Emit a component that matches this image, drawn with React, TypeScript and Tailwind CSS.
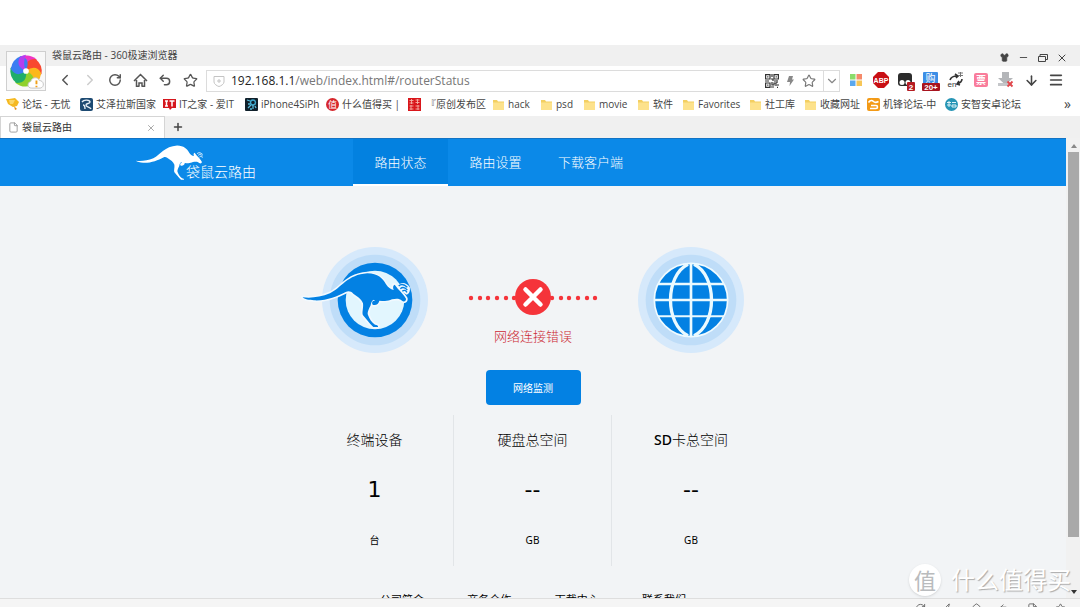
import React from 'react';
import {
  ArrowDown,
  ChevronDown,
  ChevronLeft,
  ChevronRight,
  File,
  House,
  Menu,
  Minus,
  Plus,
  RotateCw,
  Shirt,
  Star,
  Undo2,
  X,
  Zap,
} from 'lucide-react';

const UI_FONT = 'font-["Open_Sans","Noto_Sans_CJK_SC",sans-serif]';
const PAGE_FONT = 'font-["Noto_Sans","Noto_Sans_CJK_SC",sans-serif]';

const BOOKMARKS = [
  { label: '论坛 - 无忧', icon: 'cup', width: 'w-[74px]' },
  { label: '艾泽拉斯国家', icon: 'wow', width: 'w-[83px]' },
  { label: 'IT之家 - 爱IT', icon: 'it', width: 'w-[82px]' },
  { label: 'iPhone4SiPh', icon: 'phone', width: 'w-[81px]' },
  { label: '什么值得买 |', icon: 'zhi', width: 'w-[82px]' },
  { label: '『原创发布区', icon: 'seal', width: 'w-[84px]' },
  { label: 'hack', icon: 'folder', width: 'w-[48px]' },
  { label: 'psd', icon: 'folder', width: 'w-[43px]' },
  { label: 'movie', icon: 'folder', width: 'w-[54px]' },
  { label: '软件', icon: 'folder', width: 'w-[45px]' },
  { label: 'Favorites', icon: 'folder', width: 'w-[67px]' },
  { label: '社工库', icon: 'folder', width: 'w-[55px]' },
  { label: '收藏网址', icon: 'folder', width: 'w-[63px]' },
  { label: '机锋论坛-中', icon: 'gfan', width: 'w-[78px]' },
  { label: '安智安卓论坛', icon: 'anzhi', width: 'w-[80px]' },
];

const NAV_ITEMS = ['路由状态', '路由设置', '下载客户端'];

const STATS = [
  { prefix: '', title: '终端设备', value: '1', unit: '台' },
  { prefix: '', title: '硬盘总空间', value: '--', unit: 'GB' },
  { prefix: 'SD', title: '卡总空间', value: '--', unit: 'GB' },
];

const FOOTER_LINKS = ['公司简介', '商务合作', '下载中心', '联系我们'];

const BookmarkIcon = ({ kind }: { kind: string }) => {
  switch (kind) {
    case 'cup':
      return (
        <svg viewBox="0 0 13 13" className="size-[13px] shrink-0">
          <path d="M0 1l3 0 6-1 4 4-2 4-4 1-5-3z" fill="#f5b921" />
          <path d="M3 2l6 0-2 4-3 0z" fill="#fbd768" />
          <path d="M8 8l3 3-2 1z" fill="#e58f12" />
        </svg>
      );
    case 'wow':
      return (
        <svg viewBox="0 0 13 13" className="size-[13px] shrink-0">
          <rect width="13" height="13" rx="2" fill="#1d4a72" />
          <path d="M2 4c2-3 8-2 8 0s-4 1-4 3 4 2 5 4M3 7c1 0 2 1 2 4" fill="none" stroke="#e5eef5" strokeWidth="1.4" />
        </svg>
      );
    case 'it':
      return (
        <svg viewBox="0 0 13 13" className="size-[13px] shrink-0">
          <path d="M0 1h13v9H9l-2 2-1-2H0z" fill="#d5171d" />
          <path d="M2 3h3M3.5 3v5M2 8h3M6.500 3h5M9 3v5.500" fill="none" stroke="#fff" strokeWidth="1.500" />
        </svg>
      );
    case 'phone':
      return (
        <svg viewBox="0 0 13 13" className="size-[13px] shrink-0">
          <rect width="13" height="13" rx="1" fill="#10202b" />
          <circle cx="8" cy="4.500" r="2.500" fill="none" stroke="#3fa9cf" strokeWidth="1.400" />
          <path d="M2 2l3 1M6 7l-3 3M8 7v4M3 6h2M10 8l1 2M5 11h2" stroke="#57b9d9" strokeWidth="1.300" />
        </svg>
      );
    case 'zhi':
      return (
        <svg viewBox="0 0 13 13" className="size-[13px] shrink-0">
          <circle cx="6.500" cy="6.500" r="6.500" fill="#d6272c" />
          <text x="6.500" y="10" textAnchor="middle" fontSize="9" fill="#fff" fontFamily="Noto Sans CJK SC, sans-serif">值</text>
        </svg>
      );
    case 'seal':
      return (
        <svg viewBox="0 0 13 13" className="mr-0.5 size-[13px] shrink-0">
          <rect width="13" height="13" fill="#d9161b" />
          <path d="M1.500 2.500h4M1.500 5h4M3.500 1v5M7.500 2h4M7.500 4.500h4M9.500 1v5M1.500 8h4M1.500 11h4M3 7v5M7.500 8h4M7.500 11h4M10 7v5" stroke="#f6b0a6" strokeWidth="0.900" />
        </svg>
      );
    case 'gfan':
      return (
        <svg viewBox="0 0 13 13" className="size-[13px] shrink-0">
          <rect width="13" height="13" rx="2" fill="#f39a16" />
          <path d="M1.500 4.500c2-3 4-2 5-1s3 1 5 0M4 7.500h5c2 0 2 3 0 3H3" fill="none" stroke="#fff" strokeWidth="1.600" />
        </svg>
      );
    case 'anzhi':
      return (
        <svg viewBox="0 0 13 13" className="size-[13px] shrink-0">
          <circle cx="6.500" cy="6.500" r="6.500" fill="#2795b5" />
          <path d="M2 4.500h4M2 7h4M4 3v6M7 4.500h4M7 7h4v2H7z" fill="none" stroke="#dff3f8" strokeWidth="1" />
        </svg>
      );
    default:
      return (
        <svg viewBox="0 0 13 13" className="size-[13px] shrink-0">
          <path d="M1 2h4l1 1.500h6V12H1z" fill="#f3cf62" />
          <path d="M1 4.500h11V12H1z" fill="#fde28c" />
        </svg>
      );
  }
};

const PETALS = ['#ee35c4', '#f9482f', '#fcb81c', '#8fd12c', '#1fae6a', '#3b7df2'];

const BrowserLogo = () => (
  <svg viewBox="0 0 40 40" className="size-[38px]">
    {PETALS.map((color, i) => (
      <path
        key={color}
        d="M20 20Q8 15 14 5A17 17 0 0 1 31 7.500Q34 18 20 20Z"
        fill={color}
        transform={`rotate(${i * 60} 20 20)`}
      />
    ))}
    <path d="M20 20Q8 15 14 5A17 17 0 0 1 20 3Q16 12 20 20Z" fill="#b63df0" />
    <circle cx="20" cy="20" r="3" fill="#fff" />
    <path d="M26 38c-5 0-5-6-1-7 1-5 8-5 9-1 5 0 6 7 1 8z" fill="#fff" stroke="#c3c3c3" strokeWidth="1" />
    <path d="M31 30v4M31 35.500v1.500" stroke="#f0a018" strokeWidth="2" />
  </svg>
);

const QrIcon = () => (
  <svg viewBox="0 0 14 14" className="size-[14px]" fill="none" stroke="#333" strokeWidth="1.200">
    <path d="M.6.6h4.400v4.400H.6zM9 .6h4.400v4.400H9zM.6 9h4.400v4.400H.6z" />
    <path d="M2.200 2.800h1.200M10.600 2.800h1.200M2.200 11.200h1.200M7 0v3M6 5h2v2M0 7h4M9 7h2M12 6v3M7 8v3h2V9h2v3M6 13h3M12 11h2M12 13.400h1" />
  </svg>
);

const Extensions = () => (
  <>
    <button aria-label="应用" className="flex w-[18px] justify-center">
      <svg viewBox="0 0 12 12" className="size-3">
        <path d="M0 0h5.500v5.500H0z" fill="#8bdc6b" />
        <path d="M6.500 0H12v5.500H6.500z" fill="#f58a6a" />
        <path d="M0 6.500h5.500V12H0z" fill="#5ba8ee" />
        <path d="M6.500 6.500H12V12H6.500z" fill="#f7c657" />
      </svg>
    </button>
    <button aria-label="ABP" className="flex w-[18px] justify-center">
      <svg viewBox="0 0 16 16" className="size-4">
        <path d="M5 0h6l5 5v6l-5 5H5l-5-5V5z" fill="#c90f14" />
        <text x="8" y="10.500" textAnchor="middle" fontSize="7" fontWeight="700" fill="#fff" fontFamily="Liberation Sans, sans-serif">ABP</text>
      </svg>
    </button>
    <button aria-label="脚本" className="flex w-[18px] justify-center">
      <svg viewBox="0 0 18 20" className="mt-1 h-5 w-[18px]">
        <rect x="1" y="1" width="14" height="13" rx="3" fill="#2c2c2c" />
        <circle cx="5" cy="10.500" r="2.500" fill="#fff" />
        <circle cx="11" cy="10.500" r="2.500" fill="#fff" />
        <rect x="10" y="10" width="8" height="9" rx="1" fill="#b51c22" />
        <text x="14" y="17.500" textAnchor="middle" fontSize="8" fontWeight="700" fill="#fff" fontFamily="Liberation Sans, sans-serif">2</text>
      </svg>
    </button>
    <button aria-label="购物" className="flex w-[18px] justify-center">
      <svg viewBox="0 0 18 20" className="mt-1 h-5 w-[18px]">
        <rect x="1" y="0" width="15" height="13" rx="1" fill="#3c8ee6" />
        <text x="8.500" y="10" textAnchor="middle" fontSize="10" fill="#fff" fontFamily="Noto Sans CJK SC, sans-serif">购</text>
        <rect x="0" y="11" width="18" height="8" rx="1" fill="#a8141f" />
        <text x="9" y="18" textAnchor="middle" fontSize="8" fontWeight="700" fill="#fff" fontFamily="Liberation Sans, sans-serif">20+</text>
      </svg>
    </button>
    <button aria-label="翻译" className="flex w-[18px] justify-center">
      <svg viewBox="0 0 18 18" className="size-[18px]">
        <path d="M3 9c1-3 4-4 7-4M8 3l3 2-2 2M15 8c0 3-2 4-5 5M12 10l-2 3 3 1" fill="none" stroke="#333" strokeWidth="1.600" />
        <path d="M11 2h5M11 4.500h5M13.500 1v5" stroke="#777" strokeWidth="1" />
        <text x="5" y="16" textAnchor="middle" fontSize="8" fill="#333" fontFamily="Liberation Sans, sans-serif">en</text>
      </svg>
    </button>
    <button aria-label="抢票" className="flex w-[18px] justify-center">
      <span className="flex size-[14px] items-center justify-center rounded-xs bg-[#f97c9b] text-[10px] leading-none font-bold text-white">票</span>
    </button>
    <button aria-label="下载助手" className="flex w-[18px] justify-center">
      <svg viewBox="0 0 16 16" className="size-4">
        <path d="M4 0h7v6h4l-7.500 7L0 6h4z" fill="#b4b6b9" />
        <path d="M0 11h14v3H0z" fill="#c4c6c9" />
        <path d="M9.500 9.500l5 5M14.500 9.500l-5 5" stroke="#e2464b" strokeWidth="1.800" />
      </svg>
    </button>
    <button aria-label="下载" className="flex w-[18px] justify-center text-[#444]">
      <ArrowDown className="size-[15px]" strokeWidth={2.5} />
    </button>
    <button aria-label="菜单" className="flex w-[18px] justify-center text-[#444]">
      <Menu className="size-4" strokeWidth={2.5} />
    </button>
  </>
);

const KANGAROO =
  'M38 187C62 190 92 187 120 175C155 158 172 119 232 115C264 116 278 130 288 148C295 158 301 163 311 165C308 157 309 151 314 149L324 162C331 170 342 180 348 191C349 198 341 202 336 197C328 190 319 190 306 193C294 200 281 198 268 197C266 207 257 213 248 209C244 202 247 196 255 197L252 194C245 196 243 204 242 211C236 223 231 233 234 240C238 251 245 263 255 269C261 270 266 272 264 276H250C242 269 236 261 219 241C215 234 221 218 219 205C214 190 201 185 190 176C183 169 176 167 167 171C142 184 108 198 72 196C58 195 43 193 38 187Z';

const KANGAROO_EAR = 'M326 153C334 146 344 149 352 157M331 161C338 155 345 157 352 165M337 169C342 164 347 166 351 172';

const Kangaroo = () => (
  <svg viewBox="34 108 324 174" className="h-[37px] w-[69px]">
    <path d={KANGAROO} fill="#fff" />
    <path d={KANGAROO_EAR} fill="none" stroke="#fff" strokeWidth="4" />
  </svg>
);

const RouterBadge = () => (
  <svg viewBox="18 24 474 342" className="h-[114px] w-full">
    <circle cx="255" cy="195" r="159" fill="#d6e9fb" />
    <circle cx="255" cy="195" r="136" fill="#bfddf8" />
    <circle cx="255" cy="195" r="112" fill="#0381e3" />
    <circle cx="255" cy="195" r="88" fill="#e2f6fe" />
    <path d={KANGAROO} fill="#0381e3" stroke="#f2f9fe" strokeWidth="10" strokeLinejoin="round" paintOrder="stroke" />
    <path d="M322 156C330 138 350 142 359 157C362 166 357 178 350 179C340 174 332 166 322 156Z" fill="#f2f9fe" />
    <path d={KANGAROO_EAR} fill="none" stroke="#0381e3" strokeWidth="4" />
  </svg>
);

const GlobeBadge = () => (
  <svg viewBox="18 24 474 342" className="h-[114px] w-full">
    <circle cx="255" cy="195" r="159" fill="#d6e9fb" />
    <circle cx="255" cy="195" r="136" fill="#bfddf8" />
    <circle cx="255" cy="195" r="110" fill="#0381e3" stroke="#f0fbff" strokeWidth="5" />
    <g fill="none" stroke="#eafaff" strokeWidth="8">
      <path d="M255 85V305M145 195H365M156 147H354" />
      <path d="M156 244H354" strokeWidth="6" />
      <path d="M246 88C176 122 176 268 246 302M264 88C334 122 334 268 264 302" strokeWidth="10" />
    </g>
  </svg>
);

const LinkError = () => (
  <svg viewBox="0 0 158 38" className="h-[38px] w-full">
    {[17, 26, 34, 43, 52, 60, 98, 107, 115, 124, 133, 141].map((x) => (
      <circle key={x} cx={x} cy="20" r="2.200" fill="#f5343a" />
    ))}
    <circle cx="79" cy="19" r="18" fill="#f5343a" />
    <path d="M71.500 11.500l15 15M86.500 11.500l-15 15" stroke="#fff" strokeWidth="4.500" strokeLinecap="round" />
  </svg>
);

const TitleBar = () => (
  <div className="flex h-[21px] items-center justify-between bg-[#f0f0f0] pr-[9px] pl-[52px] text-[#444]">
    <span className="pb-0.5 text-[10px] leading-4">袋鼠云路由 - 360极速浏览器</span>
    <div className="flex items-center pt-1">
      <button aria-label="皮肤" className="flex w-[19px] justify-center"><Shirt className="size-[9px]" fill="currentColor" /></button>
      <button aria-label="最小化" className="flex w-[19px] justify-center"><Minus className="size-[11px]" strokeWidth={2} /></button>
      <button aria-label="还原" className="flex w-[19px] justify-center">
        <svg viewBox="0 0 10 10" className="size-[10px]" fill="none" stroke="currentColor">
          <path d="M.5 3.500h7v5h-7zM2 3.500v-2h7.500v5h-2" />
        </svg>
      </button>
      <button aria-label="关闭" className="flex w-[19px] justify-center"><X className="size-[12px]" strokeWidth={2} /></button>
    </div>
  </div>
);

const Toolbar = () => (
  <div className="flex h-7 items-center gap-[7px] bg-white pr-[15px] pl-14 text-[#555]">
    <button aria-label="后退" className="flex w-[18px] justify-center"><ChevronLeft className="size-5" /></button>
    <button aria-label="前进" className="flex w-[18px] justify-center text-[#ccc]"><ChevronRight className="size-5" /></button>
    <button aria-label="刷新" className="flex w-[18px] justify-center"><RotateCw className="size-[14px]" strokeWidth={2.5} /></button>
    <button aria-label="主页" className="flex w-[18px] justify-center">
      <svg viewBox="0 0 15 15" className="size-[15px]" fill="none" stroke="currentColor" strokeWidth="1.500">
        <path d="M1 8l6.500-6.500L14 8M3.500 7v6.200H6M11.500 7v6.200H9M6 13.800V10h3v3.800" />
      </svg>
    </button>
    <button aria-label="撤销" className="flex w-[18px] justify-center"><Undo2 className="size-[14px]" strokeWidth={2.5} /></button>
    <button aria-label="收藏" className="flex w-[18px] justify-center"><Star className="size-[15px]" /></button>
    <div className="mt-0.5 flex h-[22px] flex-1 items-center border border-[#dcdcdc] text-xs">
      <svg viewBox="0 0 12 12" className="mx-1.5 size-3 shrink-0" fill="none" stroke="#c4c4c4">
        <path d="M1 1.500h10V7c0 2-3 4-5 4.500C4 11 1 9 1 7zM6 4v4M4 6h4" />
      </svg>
      <label htmlFor="address" className="text-[#222]">192.168.1.1</label>
      <input id="address" defaultValue="/web/index.html#/routerStatus" className="min-w-0 flex-1 text-[#777] outline-none" />
      <QrIcon />
      <svg viewBox="0 0 7 10" className="mx-2 h-2.5 w-[7px]">
        <path d="M2 0h4L5 3.500h2L2.500 10 3 6H0z" fill="#888" />
      </svg>
      <Star className="mr-[7px] size-[14px] text-[#777]" />
      <button aria-label="展开" className="flex h-full w-4 items-center justify-center border-l border-[#dcdcdc] text-[#888]">
        <ChevronDown className="size-3.5" />
      </button>
    </div>
    <Extensions />
  </div>
);

const Browser = () => (
  <header className={`relative shrink-0 ${UI_FONT}`}>
    <TitleBar />
    <Toolbar />
    <a href="#" aria-label="360极速浏览器" className="absolute top-[6px] left-[6px] border border-[#cfcfcf] bg-[#f8f8f8]">
      <BrowserLogo />
    </a>
    <nav className="flex h-[22px] items-center overflow-hidden bg-white pb-0.5 pl-1.5 text-[10px] leading-4 text-[#444]">
      {BOOKMARKS.map((item) => (
        <a key={item.label} href="#" className={`flex shrink-0 items-center gap-[3px] whitespace-nowrap ${item.width}`}>
          <BookmarkIcon kind={item.icon} />
          {item.label}
        </a>
      ))}
      <button className="mr-[9px] ml-auto text-sm leading-4">»</button>
    </nav>
    <div className="flex h-[22px] bg-[#f0f0f0] text-[10px] text-[#333]">
      <div className="flex w-[165px] items-center border border-b-0 border-[#d5d5d5] bg-white px-[7px]">
        <File className="mr-[3px] size-[11px] text-[#999]" />
        <span>袋鼠云路由</span>
        <button aria-label="关闭标签" className="mr-px ml-auto text-[#999]"><X className="size-[10px]" /></button>
      </div>
      <button aria-label="新标签" className="ml-[7px] text-[#444]"><Plus className="size-3" strokeWidth={3} /></button>
    </div>
  </header>
);

const RouterHeader = () => (
  <div className="h-[48px] border-t border-[#1273c4] bg-[#0b89e8] text-white">
    <div className="mx-auto flex h-full max-w-[796px]">
      <a href="#" className="flex w-[218px] items-center">
        <Kangaroo />
        <span className="-ml-[18px] self-end pb-1 text-sm font-light">袋鼠云路由</span>
      </a>
      {NAV_ITEMS.map((item, i) => (
        <a
          key={item}
          href="#"
          className={`flex w-[95px] items-center justify-center text-[13px] font-light ${
            i === 0 ? 'border-b-2 border-white bg-[#0381e0] pt-0.5' : ''
          }`}
        >
          {item}
        </a>
      ))}
    </div>
  </div>
);

const Status = () => (
  <section className="mx-auto w-[474px] pt-[57px]">
    <div className="grid grid-cols-3">
      <RouterBadge />
      <div className="flex flex-col items-center pt-[35px]">
        <LinkError />
        <p className="mt-[10px] text-[13px] leading-5 font-light text-[#cc2a33]">网络连接错误</p>
      </div>
      <GlobeBadge />
    </div>
    <div className="mt-[13px] flex justify-center">
      <button className="h-[35px] w-[95px] rounded bg-[#0381e3] pt-0.5 text-[10px] text-white">网络监测</button>
    </div>
    <div className="mt-[10px] grid grid-cols-3 divide-x divide-[#e2e5e8] text-center text-black">
      {STATS.map((stat) => (
        <div key={stat.prefix + stat.title} className="flex h-[151px] flex-col items-center pt-[15px]">
          <h3 className="text-sm leading-5 font-light">
            <span className="font-medium">{stat.prefix}</span>
            {stat.title}
          </h3>
          <strong className='mt-[25px] font-["DejaVu_Sans",sans-serif] text-[22px] leading-[30px] font-normal'>{stat.value}</strong>
          <span className="mt-[27px] text-[10px] leading-4">{stat.unit}</span>
        </div>
      ))}
    </div>
    <footer className="mt-[26px] flex justify-between px-[84px] text-[11px] leading-4 text-black">
      {FOOTER_LINKS.map((link) => (
        <a key={link} href="#">{link}</a>
      ))}
    </footer>
  </section>
);

const ScrollBar = () => (
  <div className="flex w-[14px] shrink-0 flex-col items-center bg-[#f1f1f1] pt-1.5 pb-1 pl-px">
    <svg viewBox="0 0 6 4" className="mb-1 h-1 w-1.5"><path d="M0 4l3-4 3 4z" fill="#888" /></svg>
    <div className="flex w-full flex-1 justify-center">
      <div className="h-[88%] w-[11px] bg-[#a9a9a9]" />
    </div>
    <svg viewBox="0 0 6 4" className="h-1 w-1.5"><path d="M0 0l3 4 3-4z" fill="#333" /></svg>
  </div>
);

const App: React.FC = () => {
  return (
    <div className="relative flex h-screen flex-col overflow-hidden bg-white pt-[45px]">
      <Browser />
      <div className={`flex min-h-0 flex-1 ${PAGE_FONT}`}>
        <main className="min-w-0 flex-1 overflow-hidden bg-[#f2f4f6]">
          <RouterHeader />
          <Status />
        </main>
        <ScrollBar />
      </div>
      <div className="flex h-[9px] shrink-0 items-start justify-end gap-[17px] overflow-hidden border-t border-[#dedede] bg-[#f5f5f5] pt-1 pr-[14px] text-[#666]">
        <RotateCw className="size-[11px] shrink-0" />
        <Zap className="size-[11px] shrink-0" />
        <House className="size-[11px] shrink-0" />
        <Undo2 className="size-[11px] shrink-0" />
        <File className="size-[11px] shrink-0" />
        <Star className="size-[11px] shrink-0" />
      </div>

      {/* Watermark */}
      <div className={`pointer-events-none absolute right-[9px] bottom-[11px] flex items-center gap-[10px] text-white ${PAGE_FONT}`}>
        <span className="flex size-8 items-center justify-center rounded-full bg-white text-[22px] leading-none text-[#b9bbbd] shadow">值</span>
        <span className="text-2xl leading-8 [text-shadow:1px_1px_1px_#aaa]">什么值得买</span>
      </div>
    </div>
  );
};

export default App;
